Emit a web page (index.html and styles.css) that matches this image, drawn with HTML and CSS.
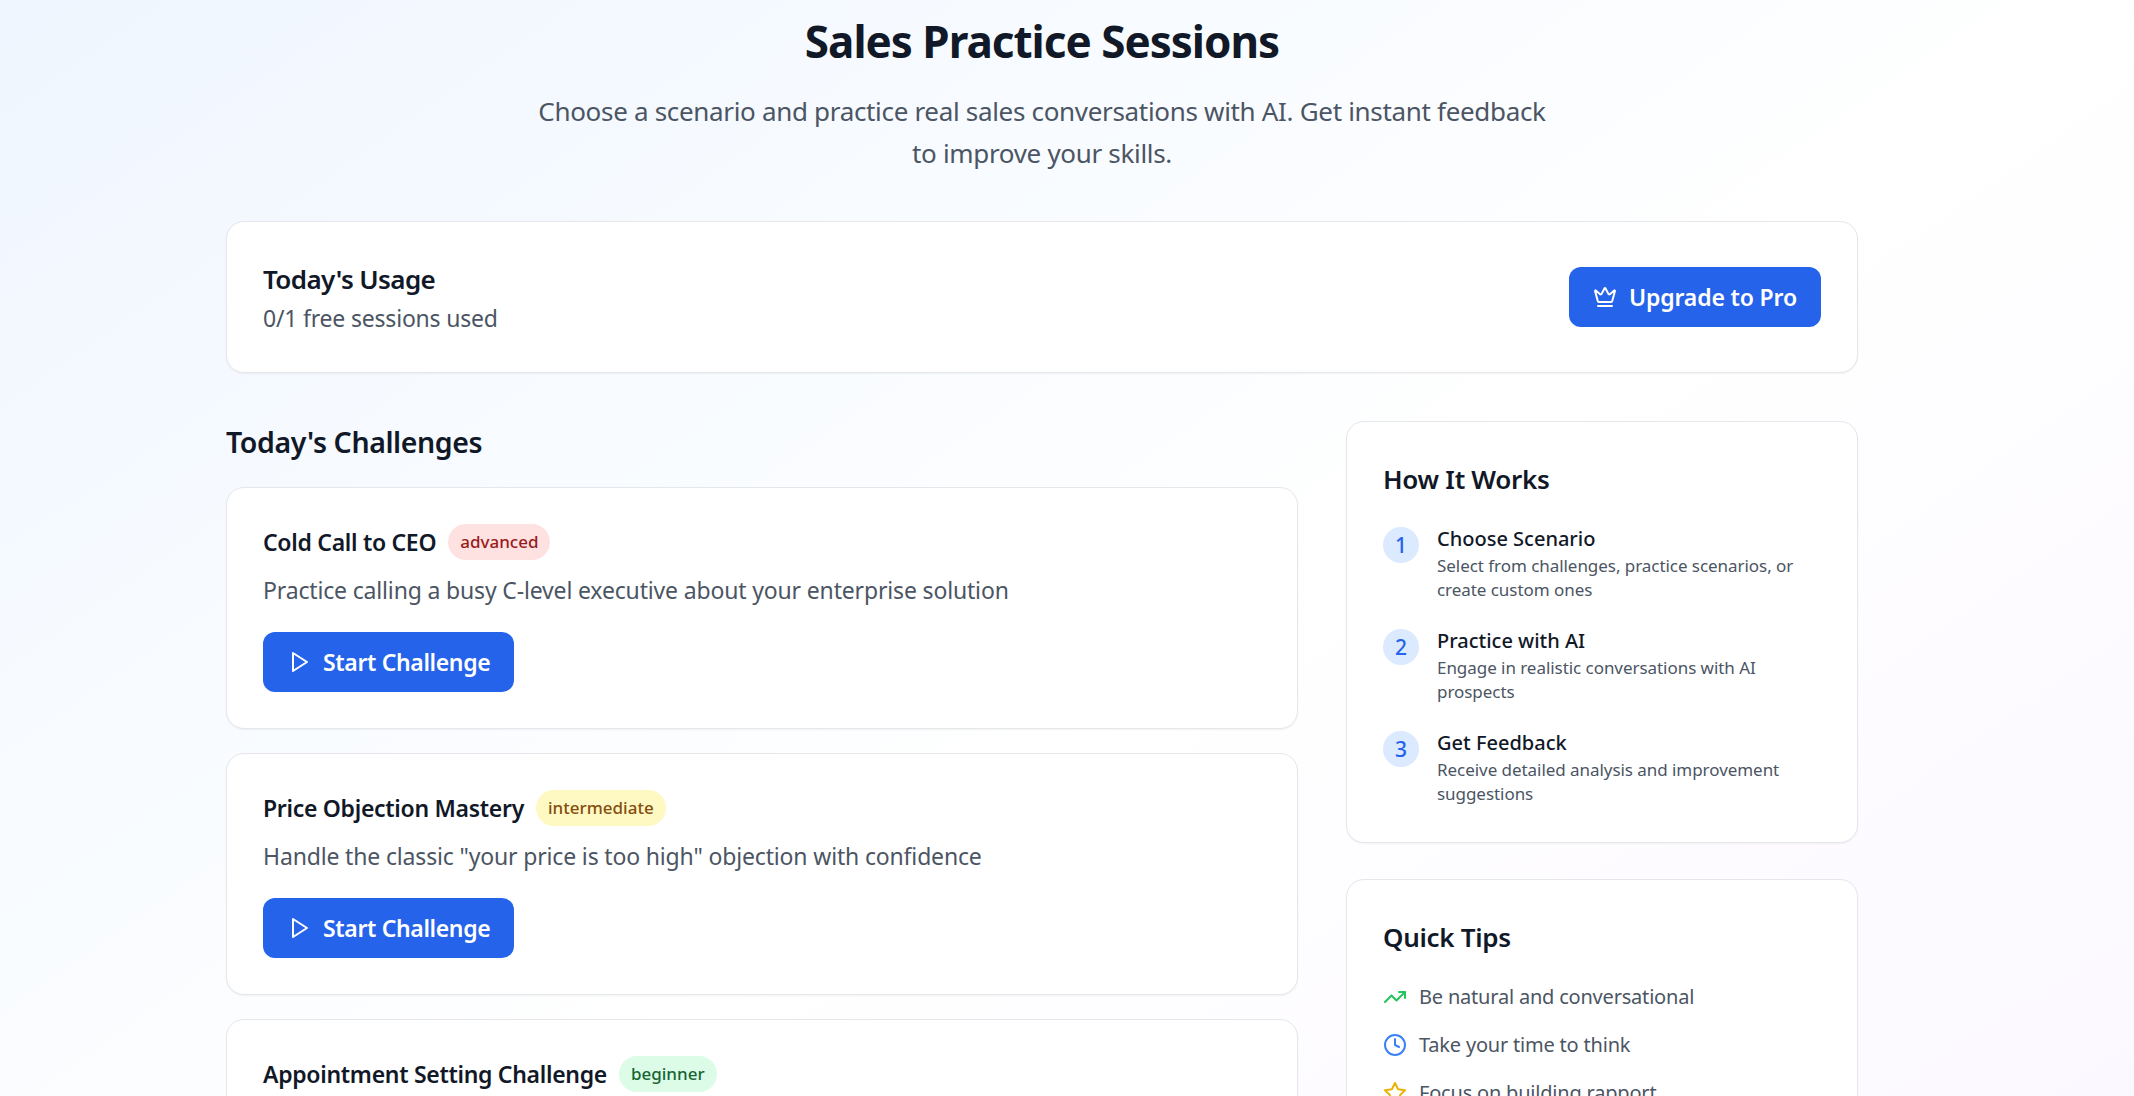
FILE: index.html
```html
<!DOCTYPE html>
<html lang="en">
<head>
    <meta charset="UTF-8">
    <meta name="viewport" content="width=device-width, initial-scale=1.0">
    <title>Sales Practice Sessions</title>
    <link rel="stylesheet" href="styles.css">
</head>
<body>

<div class="page">
    <header class="intro">
        <h1>Sales Practice Sessions</h1>
        <p>Choose a scenario and practice real sales conversations with AI. Get instant feedback to improve your skills.</p>
    </header>

    <section class="card usage">
        <div>
            <h3>Today's Usage</h3>
            <p>0/1 free sessions used</p>
        </div>
        <button class="btn">
            <svg class="icon" viewBox="0 0 24 24"><path d="M11.562 3.266a.5.5 0 0 1 .876 0L15.39 8.87a1 1 0 0 0 1.516.294L21.183 5.5a.5.5 0 0 1 .798.519l-2.834 10.246a1 1 0 0 1-.956.734H5.81a1 1 0 0 1-.957-.734L2.02 6.02a.5.5 0 0 1 .798-.519l4.276 3.664a1 1 0 0 0 1.516-.294z"/><path d="M5 21h14"/></svg>
            Upgrade to Pro
        </button>
    </section>

    <div class="columns">
        <main>
            <h2 class="section-title">Today's Challenges</h2>

            <article class="card challenge">
                <div class="challenge-head">
                    <h4>Cold Call to CEO</h4>
                    <span class="badge advanced">advanced</span>
                </div>
                <p>Practice calling a busy C-level executive about your enterprise solution</p>
                <button class="btn">
                    <svg class="icon" viewBox="0 0 24 24"><polygon points="6 3 20 12 6 21 6 3"/></svg>
                    Start Challenge
                </button>
            </article>

            <article class="card challenge">
                <div class="challenge-head">
                    <h4>Price Objection Mastery</h4>
                    <span class="badge intermediate">intermediate</span>
                </div>
                <p>Handle the classic "your price is too high" objection with confidence</p>
                <button class="btn">
                    <svg class="icon" viewBox="0 0 24 24"><polygon points="6 3 20 12 6 21 6 3"/></svg>
                    Start Challenge
                </button>
            </article>

            <article class="card challenge">
                <div class="challenge-head">
                    <h4>Appointment Setting Challenge</h4>
                    <span class="badge beginner">beginner</span>
                </div>
            </article>
        </main>

        <aside>
            <section class="card side-card">
                <h3>How It Works</h3>
                <div class="steps">
                    <div class="step">
                        <span class="step-num">1</span>
                        <div>
                            <h5>Choose Scenario</h5>
                            <p>Select from challenges, practice scenarios, or create custom ones</p>
                        </div>
                    </div>
                    <div class="step">
                        <span class="step-num">2</span>
                        <div>
                            <h5>Practice with AI</h5>
                            <p>Engage in realistic conversations with AI prospects</p>
                        </div>
                    </div>
                    <div class="step">
                        <span class="step-num">3</span>
                        <div>
                            <h5>Get Feedback</h5>
                            <p>Receive detailed analysis and improvement suggestions</p>
                        </div>
                    </div>
                </div>
            </section>

            <section class="card side-card">
                <h3>Quick Tips</h3>
                <ul class="tips">
                    <li>
                        <svg class="icon green" viewBox="0 0 24 24"><polyline points="22 7 13.5 15.5 8.5 10.5 2 17"/><polyline points="16 7 22 7 22 13"/></svg>
                        Be natural and conversational
                    </li>
                    <li>
                        <svg class="icon blue" viewBox="0 0 24 24"><circle cx="12" cy="12" r="10"/><polyline points="12 6 12 12 16 14"/></svg>
                        Take your time to think
                    </li>
                    <li>
                        <svg class="icon yellow" viewBox="0 0 24 24"><polygon points="12 2 15.09 8.26 22 9.27 17 14.14 18.18 21.02 12 17.77 5.82 21.02 7 14.14 2 9.27 8.91 8.26 12 2"/></svg>
                        Focus on building rapport
                    </li>
                </ul>
            </section>
        </aside>
    </div>
</div>

</body>
</html>
```
FILE: styles.css
```css
html, body {
    height: 100%;
    margin: 0;
    overflow: hidden;
}
body {
    font-family: "Noto Sans", "Open Sans", Arial, sans-serif;
    color: #111827;
    background: linear-gradient(to bottom right, #eff6ff 0%, #ffffff 50%, #faf5ff 100%) no-repeat;
    background-size: 100% 1500px;
}
h1, h2, h3, h4, h5, p, ul {
    margin: 0;
    padding: 0;
}
.page {
    width: 1632px;
    margin-left: 226px;
    padding-top: 14px;
}
.intro {
    text-align: center;
    margin-bottom: 47px;
}
.intro h1 {
    font-size: 44px;
    line-height: 54px;
    font-weight: 700;
    letter-spacing: -1px;
    margin-bottom: 22px;
}
.intro p {
    width: 1024px;
    margin: 0 auto;
    font-size: 26px;
    line-height: 42px;
    letter-spacing: -0.32px;
    color: #4b5563;
}
.card {
    background-color: #fff;
    border: 1px solid #e5e7eb;
    border-radius: 18px;
    box-shadow: 0 1px 2px rgba(0, 0, 0, 0.05);
    padding: 36px;
}
.usage {
    display: flex;
    justify-content: space-between;
    align-items: center;
    margin-bottom: 48px;
}
.usage h3 {
    font-size: 26px;
    line-height: 42px;
    font-weight: 600;
    letter-spacing: -0.6px;
}
.usage p {
    font-size: 23px;
    line-height: 36px;
    letter-spacing: -0.2px;
    color: #4b5563;
}
.usage .btn {
    letter-spacing: -0.15px;
}
.btn {
    display: inline-flex;
    align-items: center;
    gap: 12px;
    height: 60px;
    padding: 0 24px;
    background-color: #2563eb;
    border: none;
    border-radius: 12px;
    color: #fff;
    font-family: inherit;
    font-size: 23px;
    font-weight: 600;
    letter-spacing: -0.35px;
}
.icon {
    width: 24px;
    height: 24px;
    flex-shrink: 0;
    fill: none;
    stroke: currentColor;
    stroke-width: 2;
    stroke-linecap: round;
    stroke-linejoin: round;
}
.columns {
    display: grid;
    grid-template-columns: 1072px 512px;
    gap: 48px;
}
.section-title {
    font-size: 28.5px;
    line-height: 42px;
    font-weight: 600;
    letter-spacing: -0.4px;
    margin-bottom: 24px;
}
.challenge {
    margin-bottom: 24px;
}
.challenge-head {
    display: flex;
    align-items: center;
    gap: 12px;
    margin-bottom: 12px;
}
.challenge h4 {
    font-size: 23px;
    line-height: 36px;
    font-weight: 600;
    letter-spacing: -0.3px;
}
.challenge p {
    font-size: 23px;
    line-height: 36px;
    letter-spacing: -0.16px;
    color: #4b5563;
    margin-bottom: 24px;
}
.badge {
    font-size: 17px;
    line-height: 24px;
    font-weight: 500;
    padding: 6px 12px;
    border-radius: 999px;
}
.advanced {
    background-color: #fee2e2;
    color: #991b1b;
}
.intermediate {
    background-color: #fef9c3;
    color: #854d0e;
}
.beginner {
    background-color: #dcfce7;
    color: #166534;
}
.side-card {
    margin-bottom: 36px;
}
.side-card h3 {
    font-size: 26px;
    line-height: 42px;
    font-weight: 600;
    letter-spacing: -0.3px;
    margin-bottom: 24px;
}
.steps {
    display: flex;
    flex-direction: column;
    gap: 24px;
}
.step {
    display: flex;
    align-items: flex-start;
    gap: 18px;
}
.step-num {
    display: flex;
    align-items: center;
    justify-content: center;
    flex-shrink: 0;
    width: 36px;
    height: 36px;
    margin-top: 3px;
    border-radius: 50%;
    background-color: #dbeafe;
    color: #2563eb;
    font-size: 21px;
    font-weight: 500;
}
.step h5 {
    font-size: 20px;
    line-height: 30px;
    font-weight: 500;
}
.step p {
    font-size: 17px;
    line-height: 24px;
    letter-spacing: -0.05px;
    color: #4b5563;
}
.tips {
    list-style: none;
    display: flex;
    flex-direction: column;
    gap: 18px;
}
.tips li {
    display: flex;
    align-items: center;
    gap: 12px;
    font-size: 20px;
    line-height: 30px;
    letter-spacing: -0.2px;
    color: #4b5563;
}
.green {
    color: #22c55e;
}
.blue {
    color: #3b82f6;
}
.yellow {
    color: #eab308;
}
```
